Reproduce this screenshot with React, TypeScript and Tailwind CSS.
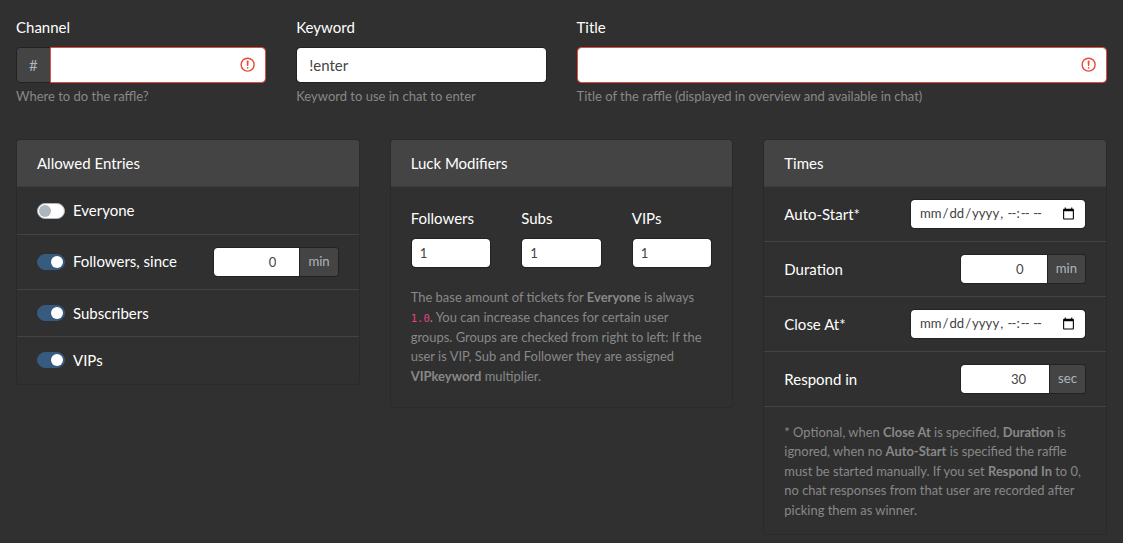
import { useState, type ReactNode } from "react";

const inputBase =
  "block min-w-0 appearance-none rounded-[4px] border border-[#222] bg-white bg-clip-padding text-[#444] outline-none";
const inputMd = "h-[36.5px] px-3 py-1.5 text-[15px] leading-[22.5px]";
const inputSm = "h-[29.9px] px-2 py-1 text-[13.125px] leading-[19.9px] rounded-[3.2px]";

function InvalidIcon() {
  return (
    <svg
      className="pointer-events-none absolute top-[9px] right-[10px] size-[17.25px]"
      viewBox="0 0 12 12"
      fill="none"
      stroke="#E74C3C"
    >
      <circle cx="6" cy="6" r="4.5" />
      <path strokeLinejoin="round" d="M5.8 3.6h.4L6 6.5z" />
      <circle cx="6" cy="8.2" r=".6" fill="#E74C3C" stroke="none" />
    </svg>
  );
}

function Field({ label, hint, className, children }: { label: string; hint: string; className: string; children: ReactNode }) {
  return (
    <div className={`px-[15px] ${className}`}>
      <label className="mb-2 block">{label}</label>
      {children}
      <small className="mt-1 block text-[13px] leading-[19.6875px] text-[#888]">{hint}</small>
    </div>
  );
}

function Card({ title, children }: { title: string; children: ReactNode }) {
  return (
    <div className="w-1/3 px-[15px]">
      <div className="flex flex-col rounded-[4px] border border-black/[0.125] bg-[#303030] bg-clip-border">
        <div className="rounded-t-[3px] border-b border-black/[0.125] bg-[#444] px-5 py-3">{title}</div>
        {children}
      </div>
    </div>
  );
}

function Row({ children, last = false }: { children: ReactNode; last?: boolean }) {
  return (
    <div className={`flex items-center px-5 py-3 ${last ? "" : "border-b border-[#444]"}`}>{children}</div>
  );
}

function Toggle({ label, initial }: { label: string; initial: boolean }) {
  const [on, setOn] = useState(initial);
  return (
    <label className="mr-auto flex items-center">
      <input type="checkbox" className="sr-only" checked={on} onChange={() => setOn(!on)} />
      <span
        className={`mr-2 flex h-4 w-7 items-center rounded-full border px-px ${
          on ? "justify-end border-[#375a7f] bg-[#375a7f]" : "mt-px justify-start border-[#adb5bd] bg-white"
        }`}
      >
        <span className={`size-3 rounded-full ${on ? "bg-white" : "bg-[#adb5bd]"}`} />
      </span>
      {label}
    </label>
  );
}

function UnitInput({ value, unit, className }: { value: number; unit: string; className: string }) {
  return (
    <div className={`flex ${className}`}>
      <input type="number" defaultValue={value} className={`${inputBase} ${inputSm} w-0 flex-1 rounded-r-none text-right`} />
      <span className="-ml-px flex items-center rounded-r-[3.2px] border border-[#222] bg-[#444] px-2 py-1 text-[13.125px] leading-[19.6875px] text-[#adb5bd]">
        {unit}
      </span>
    </div>
  );
}

function LuckInput({ label }: { label: string }) {
  return (
    <div className="w-1/3 px-[15px]">
      <label className="mb-2 block">{label}</label>
      <input type="number" defaultValue={1} className={`${inputBase} ${inputSm} w-full`} />
    </div>
  );
}

function DateInput() {
  return (
    <div className={`${inputBase} ${inputSm} !flex w-[176px] items-center justify-between !pt-[3.6px] !pb-[4.4px]`}>
      <div className="flex whitespace-pre">
        <span className="px-px">mm</span>/<span className="px-px">dd</span>/<span className="px-px">yyyy</span>
        <span>, </span>
        <span className="px-px tracking-[-0.9px]">--</span>
        <span>:</span>
        <span className="px-px tracking-[-0.9px]">--</span>
        <span className="tracking-[-0.9px]"> </span>
        <span className="px-px tracking-[-0.9px]">--</span>
      </div>
      <svg className="mr-[1.5px] size-[13px]" viewBox="0 0 24 24" fill="#000">
        <path d="M20 3h-1V1h-2v2H7V1H5v2H4c-1.1 0-2 .9-2 2v16c0 1.1.9 2 2 2h16c1.1 0 2-.9 2-2V5c0-1.1-.9-2-2-2zm0 18H4V8h16v13z" />
      </svg>
    </div>
  );
}

export default function App() {
  return (
    <div className="min-h-screen w-[1123px] overflow-hidden bg-[#303030] pt-4 font-['Lato',sans-serif] text-[15px] leading-[22.5px] text-white">
      <div className="ml-px flex w-[1121px]">
        <Field label="Channel" hint="Where to do the raffle?" className="w-1/4">
          <div className="flex">
            <span className="flex items-center rounded-l-[4px] border border-[#222] bg-[#444] px-3 py-1.5 text-[#adb5bd]">#</span>
            <div className="relative -ml-px flex-1">
              <input className={`${inputBase} ${inputMd} w-full rounded-l-none !border-[#E74C3C]`} />
              <InvalidIcon />
            </div>
          </div>
        </Field>
        <Field label="Keyword" hint="Keyword to use in chat to enter" className="w-1/4">
          <input defaultValue="!enter" className={`${inputBase} ${inputMd} w-full`} />
        </Field>
        <Field label="Title" hint="Title of the raffle (displayed in overview and available in chat)" className="w-1/2">
          <div className="relative">
            <input className={`${inputBase} ${inputMd} w-full !border-[#E74C3C]`} />
            <InvalidIcon />
          </div>
        </Field>
      </div>

      <div className="mt-8 ml-px flex w-[1121px] items-start">
        <Card title="Allowed Entries">
          <Row><Toggle label="Everyone" initial={false} /></Row>
          <Row>
            <Toggle label="Followers, since" initial />
            <UnitInput value={0} unit="min" className="w-[125.5px]" />
          </Row>
          <Row><Toggle label="Subscribers" initial /></Row>
          <Row last><Toggle label="VIPs" initial /></Row>
        </Card>

        <Card title="Luck Modifiers">
          <div className="p-5">
            <div className="-mx-[15px] flex">
              <LuckInput label="Followers" />
              <LuckInput label="Subs" />
              <LuckInput label="VIPs" />
            </div>
            <p className="mt-[20.6px] text-[12.96px] leading-[19.6875px] text-[#888]">
              The base amount of tickets for <strong>Everyone</strong> is always{" "}
              <code className="font-['DejaVu_Sans_Mono',monospace] text-[10.6px] leading-none text-[#e83e8c]">1.0</code>. You can
              increase chances for certain user groups. Groups are checked from right to left: If the user is VIP, Sub and
              Follower they are assigned <strong>VIPkeyword</strong> multiplier.
            </p>
          </div>
        </Card>

        <Card title="Times">
          <Row><span className="mr-auto">Auto-Start*</span><DateInput /></Row>
          <Row><span className="mr-auto">Duration</span><UnitInput value={0} unit="min" className="w-[125.5px]" /></Row>
          <Row><span className="mr-auto">Close At*</span><DateInput /></Row>
          <Row><span className="mr-auto">Respond in</span><UnitInput value={30} unit="sec" className="w-[125.5px]" /></Row>
          <p className="px-5 pt-[15.9px] pb-[13px] text-[12.92px] leading-[19.6px] text-[#888]">
            * Optional, when <strong>Close At</strong> is specified, <strong>Duration</strong> is ignored, when no{" "}
            <strong>Auto-Start</strong> is specified the raffle must be started manually. If you set{" "}
            <strong>Respond In</strong> to 0, no chat responses from that user are recorded after picking them as winner.
          </p>
        </Card>
      </div>
    </div>
  );
}
